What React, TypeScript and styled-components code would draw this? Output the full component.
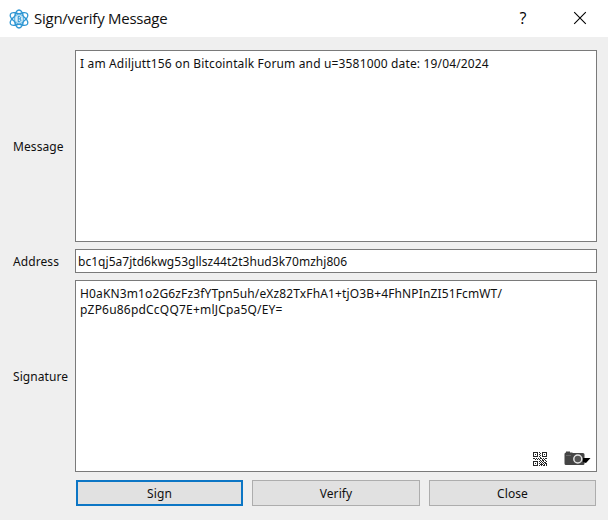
import React from "react";
import styled, { createGlobalStyle } from "styled-components";

const GlobalStyle = createGlobalStyle`
  * { box-sizing: border-box; }
  body { margin: 0; background: #efefef; }
`;

const Dialog = styled.main`
  display: flex;
  flex-direction: column;
  width: 608px;
  height: 520px;
  background: #efefef;
  color: #101010;
  font: 12px/16px "Noto Sans", Tahoma, sans-serif;
`;

const TitleBar = styled.header`
  display: flex;
  align-items: center;
  flex: 0 0 37px;
  padding: 0 21px 0 8px;
  background: #fff;
`;

const Title = styled.h1`
  flex: 1;
  margin: 0 0 2px 4px;
  font: 400 15px/20px "Open Sans", "Segoe UI", sans-serif;
  letter-spacing: -0.26px;
  white-space: nowrap;
`;

const WindowButton = styled.button`
  display: flex;
  align-items: center;
  justify-content: center;
  width: 14px;
  height: 20px;
  margin-bottom: 1px;
  padding: 0;
  border: 0;
  background: none;
  color: #000;
  font: 400 16px/20px "Open Sans", "Segoe UI", sans-serif;

  & + & { margin-left: 43px; }
`;

const Form = styled.section`
  display: grid;
  grid-template-columns: 62px 522px;
  grid-template-rows: 192px 24px 192px;
  row-gap: 7px;
  align-items: center;
  margin: 13px 0 0 13px;
`;

const Label = styled.label`
  padding-top: 2px;
  letter-spacing: 0.08px;
`;

const TextBox = styled.div`
  display: flex;
  flex-direction: column;
  justify-content: space-between;
  height: 100%;
  padding: 5px 5px 4px 4px;
  border: 1px solid #7a7a7a;
  background: #fff;
`;

const LineBox = styled(TextBox)`
  justify-content: center;
  padding: 2px 2px 0;
`;

const Line = styled.div<{ $tracking: number }>`
  letter-spacing: ${(p) => p.$tracking}px;
  white-space: nowrap;
`;

const Tools = styled.div`
  display: flex;
  align-items: center;
  justify-content: flex-end;
  gap: 17px;
`;

const Actions = styled.footer`
  display: grid;
  grid-template-columns: 167px 168px 167px;
  column-gap: 9px;
  margin: 8px 0 0 76px;
`;

const Button = styled.button<{ $primary?: boolean }>`
  height: 26px;
  padding: 2px 0 0;
  border: ${(p) => (p.$primary ? "2px solid #0c76c5" : "1px solid #adadad")};
  background: #e1e1e1;
  color: #101010;
  font: inherit;
  letter-spacing: 0.1px;
`;

const Icon = styled.svg`
  display: block;
  flex: none;
`;

const Logo = () => (
  <Icon width="22" height="20" viewBox="0 0 22 20" fill="none" stroke="#2e96d3" strokeWidth="1.3">
    <ellipse cx="11" cy="10" rx="9.9" ry="4.5" transform="rotate(30 11 10)" />
    <ellipse cx="11" cy="10" rx="9.9" ry="4.5" transform="rotate(-30 11 10)" />
    <ellipse cx="11" cy="10" rx="4.5" ry="9" />
    <circle cx="11" cy="10" r="4.2" fill="#e0f2fc" stroke="#8accee" strokeWidth="1" />
    <path d="M9.8 7.7h1.8c1.6 0 1.6 2.2 0 2.2h-1.4m1.4 0c1.9 0 1.9 2.5 0 2.5H9.8M10.2 7.7v4.7M11 6.7v1M11 12.4v1" strokeWidth="1" />
  </Icon>
);

const qrRows = [
  "11111010011111",
  "10001001010001",
  "10101010010101",
  "10001001010001",
  "11111010011111",
  "00000001000000",
  "11010101101011",
  "00101010010100",
  "00000001011010",
  "11111010101001",
  "10001001010110",
  "10101010101011",
  "10001001110101",
  "11111010101101",
];

const QrIcon = () => (
  <Icon width="14" height="14" viewBox="0 0 14 14" shapeRendering="crispEdges" fill="#262626">
    {qrRows.flatMap((row, y) =>
      [...row].map((cell, x) =>
        cell === "1" ? <rect key={`${x}-${y}`} x={x} y={y} width="1" height="1" /> : null,
      ),
    )}
  </Icon>
);

const CameraIcon = () => (
  <Icon width="27" height="16" viewBox="0 0 27 16">
    <path d="M2 1.5V.5h4v1h2l1 .5h10q1.5 0 1.5 1.5v9q0 1.5-1.5 1.5H2Q.5 14 .5 12.5V3Q.5 1.5 2 1.5Z" fill="#454545" />
    <path d="M2 4.5h5" stroke="#686868" />
    <path d="M19 7h7.5L22 12l-3-1Z" fill="#000" />
    <circle cx="13.8" cy="8" r="4" fill="#555" stroke="#e5e5e5" strokeWidth="1.5" />
  </Icon>
);

const CloseIcon = () => (
  <Icon width="14" height="14" viewBox="0 0 14 14" stroke="#000" strokeWidth="1.1">
    <path d="m1.2 1.2 11.6 11.6M12.8 1.2 1.2 12.8" />
  </Icon>
);

export default function App() {
  return (
    <>
      <GlobalStyle />
      <Dialog>
        <TitleBar>
          <Logo />
          <Title>Sign/verify Message</Title>
          <WindowButton>?</WindowButton>
          <WindowButton aria-label="Close window"><CloseIcon /></WindowButton>
        </TitleBar>
        <Form>
          <Label>Message</Label>
          <TextBox>
            <Line $tracking={0.155}>I am Adiljutt156 on Bitcointalk Forum and u=3581000 date: 19/04/2024</Line>
          </TextBox>
          <Label>Address</Label>
          <LineBox>
            <Line $tracking={0.03}>bc1qj5a7jtd6kwg53gllsz44t2t3hud3k70mzhj806</Line>
          </LineBox>
          <Label>Signature</Label>
          <TextBox>
            <div>
              <Line $tracking={0.135}>H0aKN3m1o2G6zFz3fYTpn5uh/eXz82TxFhA1+tjO3B+4FhNPInZI51FcmWT/</Line>
              <Line $tracking={0.2}>pZP6u86pdCcQQ7E+mlJCpa5Q/EY=</Line>
            </div>
            <Tools>
              <QrIcon />
              <CameraIcon />
            </Tools>
          </TextBox>
        </Form>
        <Actions>
          <Button $primary>Sign</Button>
          <Button>Verify</Button>
          <Button>Close</Button>
        </Actions>
      </Dialog>
    </>
  );
}
